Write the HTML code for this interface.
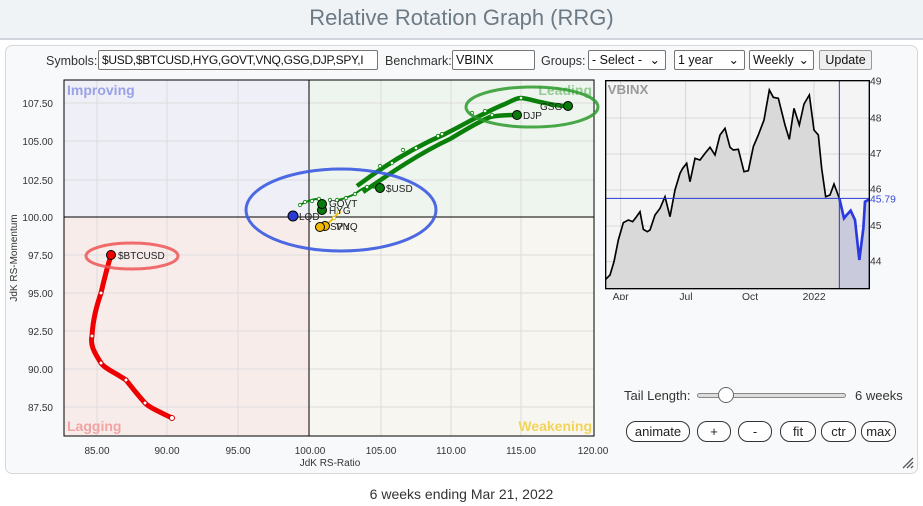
<!DOCTYPE html>
<html><head><meta charset="utf-8"><style>
*{box-sizing:border-box}
body{margin:0;width:923px;height:506px;background:#fff;font-family:"Liberation Sans",sans-serif;position:relative;overflow:hidden}
.hdr{position:absolute;left:0;top:0;width:923px;height:40px;background:#f0f3f5;border-bottom:2px solid #cfd5da;text-align:center;font-size:22px;color:#6c7a86;line-height:36px}
.panel{position:absolute;left:5px;top:45px;width:913px;height:429px;border:1px solid #d5d8db;border-radius:7px;background:#f8f9fa}
.ctl{position:absolute;font-size:12.5px;color:#333;top:52px;height:20px;line-height:18px}
.inp{position:absolute;top:50px;height:20px;border:1px solid #767676;background:#fff;font-size:12.5px;line-height:18px;padding-left:3px;color:#111;border-radius:2px;white-space:nowrap;overflow:hidden}
.btn{position:absolute;top:421px;height:21px;border:1px solid #333;border-radius:10px;background:#fff;font-size:13px;text-align:center;line-height:19px;color:#222}
.foot{position:absolute;top:486px;left:0;width:923px;text-align:center;font-size:14px;color:#333}
</style></head><body>
<div class="hdr">Relative Rotation Graph (RRG)</div>
<div class="panel"></div>
<div class="ctl" style="left:46px">Symbols:</div>
<div class="inp" style="left:98px;width:280px;font-size:12px;letter-spacing:-0.3px">$USD,$BTCUSD,HYG,GOVT,VNQ,GSG,DJP,SPY,I</div>
<div class="ctl" style="left:385px">Benchmark:</div>
<div class="inp" style="left:452px;width:83px">VBINX</div>
<div class="ctl" style="left:541px">Groups:</div>
<div class="inp" style="left:588px;width:78px">- Select -<span style="position:absolute;right:5px">&#8964;</span></div>
<div class="inp" style="left:674px;width:71px">1 year<span style="position:absolute;right:5px">&#8964;</span></div>
<div class="inp" style="left:749px;width:65px">Weekly<span style="position:absolute;right:4px">&#8964;</span></div>
<div class="inp" style="left:819px;width:53px;background:#efefef;border-color:#999;text-align:center;padding:0">Update</div>

<svg style="position:absolute;left:0;top:0" width="923" height="506" font-family="Liberation Sans, sans-serif">
<rect x="64" y="80" width="245" height="137" fill="#eeeff7"/>
<rect x="309" y="80" width="285" height="137" fill="#eef4ee"/>
<rect x="64" y="217" width="245" height="219" fill="#f8eceb"/>
<rect x="309" y="217" width="285" height="219" fill="#f8f6f0"/>
<g stroke="#dcdcdc" stroke-width="1">
<line x1="97" y1="80" x2="97" y2="436"/><line x1="167" y1="80" x2="167" y2="436"/><line x1="238" y1="80" x2="238" y2="436"/><line x1="381" y1="80" x2="381" y2="436"/><line x1="451" y1="80" x2="451" y2="436"/><line x1="521" y1="80" x2="521" y2="436"/>
<line x1="64" y1="103" x2="594" y2="103"/><line x1="64" y1="141" x2="594" y2="141"/><line x1="64" y1="180" x2="594" y2="180"/><line x1="64" y1="255" x2="594" y2="255"/><line x1="64" y1="293" x2="594" y2="293"/><line x1="64" y1="331" x2="594" y2="331"/><line x1="64" y1="369" x2="594" y2="369"/><line x1="64" y1="407" x2="594" y2="407"/>
</g>
<line x1="309" y1="80" x2="309" y2="436" stroke="#000"/><line x1="64" y1="217" x2="594" y2="217" stroke="#000"/>
<rect x="64" y="80" width="530" height="356" fill="none" stroke="#000"/>
<g font-size="14" font-weight="bold">
<text x="67" y="95" fill="#9aa2e6">Improving</text>
<text x="592" y="95" fill="#94cc94" text-anchor="end">Leading</text>
<text x="67" y="431" fill="#f0a4a4">Lagging</text>
<text x="592" y="431" fill="#f2d45a" text-anchor="end">Weakening</text>
</g>
<g font-size="10" fill="#333" text-anchor="end">
<text x="53" y="107">107.50</text><text x="53" y="145">105.00</text><text x="53" y="184">102.50</text><text x="53" y="221">100.00</text><text x="53" y="259">97.50</text><text x="53" y="297">95.00</text><text x="53" y="335">92.50</text><text x="53" y="373">90.00</text><text x="53" y="411">87.50</text>
</g>
<g font-size="10" fill="#333" text-anchor="middle">
<text x="97" y="454">85.00</text><text x="167" y="454">90.00</text><text x="238" y="454">95.00</text><text x="310" y="454">100.00</text><text x="381" y="454">105.00</text><text x="451" y="454">110.00</text><text x="521" y="454">115.00</text><text x="593" y="454">120.00</text>
<text x="330" y="466">JdK RS-Ratio</text>
</g>
<text transform="translate(17,258) rotate(-90)" font-size="10" fill="#333" text-anchor="middle">JdK RS-Momentum</text>
<path d="M172,418 C160,412 150,408 145,403 C136,393 130,385 126,380 C114,372 104,368 101,363 C94,352 90,345 92,336 C93,318 97,305 101,293 C104,280 108,265 111,255" fill="none" stroke="#e00" stroke-width="5" stroke-linecap="round"/>
<g fill="#fff" stroke="#c00" stroke-width="1"><circle cx="172" cy="418" r="2.5"/><circle cx="145" cy="403" r="2"/><circle cx="126" cy="380" r="2"/><circle cx="101" cy="363" r="2"/><circle cx="92" cy="336" r="2"/><circle cx="101" cy="293" r="2"/></g>
<ellipse cx="132" cy="256" rx="46" ry="13" fill="none" stroke="#e55" stroke-width="3" opacity="0.85"/>
<circle cx="111" cy="255" r="4.5" fill="#e00" stroke="#000"/>
<text x="118" y="259" font-size="10" fill="#222">$BTCUSD</text>
<path d="M357,186 C385,165 415,147 445,134 C465,124 485,112 505,104 C512,101 516,98 521,98 C530,99 535,101 540,102 C550,104 558,106 567,106" fill="none" stroke="#0a800a" stroke-width="4.5"/>
<path d="M363,192 C392,172 420,153 450,139 C465,130 478,122 490,117 C500,115 510,115 517,115" fill="none" stroke="#0a800a" stroke-width="4.5"/>
<g fill="#fff" stroke="#080" stroke-width=".8"><circle cx="380" cy="166" r="1.7"/><circle cx="392" cy="163" r="1.7"/><circle cx="403" cy="150" r="1.7"/><circle cx="416" cy="148" r="1.7"/><circle cx="438" cy="136" r="1.7"/><circle cx="442" cy="134" r="1.7"/><circle cx="472" cy="113" r="1.7"/><circle cx="485" cy="111" r="1.7"/><circle cx="492" cy="115" r="1.7"/><circle cx="521" cy="98" r="1.7"/></g>
<ellipse cx="532" cy="107" rx="66" ry="20" fill="none" stroke="#2a9a2a" stroke-width="3" opacity="0.85"/>
<circle cx="568" cy="106" r="4.5" fill="#0a7a0a" stroke="#000"/>
<circle cx="517" cy="115" r="4.5" fill="#0a7a0a" stroke="#000"/>
<text x="540" y="110" font-size="10" fill="#222">GSG</text>
<text x="523" y="119" font-size="10" fill="#222">DJP</text>
<path d="M337,200 C345,199 350,196 355,194 C360,190 364,187 368,187 L380,188" fill="none" stroke="#0a800a" stroke-width="2"/>
<path d="M300,205 C305,202 310,200 316,199 C320,199 322,202 322,203" fill="none" stroke="#0a800a" stroke-width="2"/>
<path d="M339,212 C334,218 330,222 325,226" fill="none" stroke="#f0c000" stroke-width="2"/>
<g fill="#fff" stroke="#080" stroke-width=".8"><circle cx="337" cy="200" r="1.7"/><circle cx="346" cy="198" r="1.7"/><circle cx="355" cy="194" r="1.7"/><circle cx="367" cy="187" r="1.7"/><circle cx="300" cy="205" r="1.7"/><circle cx="305" cy="202" r="1.7"/><circle cx="312" cy="201" r="1.7"/><circle cx="319" cy="199" r="1.7"/><circle cx="330" cy="200" r="1.7"/></g>
<g fill="#fff" stroke="#e0b000" stroke-width=".8"><circle cx="339" cy="212" r="1.7"/><circle cx="334" cy="218" r="1.7"/></g>
<ellipse cx="341" cy="210" rx="95" ry="41" fill="none" stroke="#3a5ae0" stroke-width="3" opacity="0.9"/>
<circle cx="380" cy="188" r="4.5" fill="#0a7a0a" stroke="#000"/>
<circle cx="322" cy="210" r="4.5" fill="#0a7a0a" stroke="#000"/>
<circle cx="322" cy="204" r="4.5" fill="#0a7a0a" stroke="#000"/>
<circle cx="293" cy="216" r="5" fill="#2a3ad0" stroke="#000"/>
<circle cx="325" cy="226" r="4.5" fill="#f0b800" stroke="#000"/>
<circle cx="320" cy="227" r="4.5" fill="#f0b800" stroke="#000"/>
<g font-size="10" fill="#222"><text x="386" y="192">$USD</text><text x="329" y="207">GOVT</text><text x="329" y="214">HYG</text><text x="299" y="220">LQD</text><text x="330" y="230">SPY</text><text x="336" y="230">VNQ</text></g>
</svg>

<svg style="position:absolute;left:460px;top:40px" width="463" height="260" viewBox="0 0 1389 780" font-family="Liberation Sans, sans-serif">
<rect x="437" y="122" width="791" height="624" fill="#f4f4f4"/>
<g stroke="#d2d2d2" stroke-width="2.5"><line x1="482" y1="122" x2="482" y2="746"/><line x1="677" y1="122" x2="677" y2="746"/><line x1="870" y1="122" x2="870" y2="746"/><line x1="1062" y1="122" x2="1062" y2="746"/>
<line x1="437" y1="234" x2="1228" y2="234"/><line x1="437" y1="342" x2="1228" y2="342"/><line x1="437" y1="450" x2="1228" y2="450"/><line x1="437" y1="558" x2="1228" y2="558"/><line x1="437" y1="665" x2="1228" y2="665"/></g>
<path d="M437,718 L450,705 462,665 475,600 490,548 505,540 518,545 528,532 540,515 550,568 562,575 570,570 585,525 600,505 615,470 630,530 645,450 660,400 668,385 680,370 690,425 705,355 720,360 735,340 750,322 765,345 780,285 795,265 810,322 820,330 835,328 852,395 865,392 880,320 895,285 912,240 928,150 940,172 955,175 975,255 988,298 1002,205 1018,255 1032,192 1048,165 1062,270 1075,285 1085,385 1097,470 1110,465 1122,432 1138,475 L1138,746 L437,746Z" fill="#d9d9d9"/>
<path d="M1138,475 L1152,535 1160,525 1172,512 1185,540 1198,660 1210,565 1215,485 1228,478 L1228,746 L1138,746Z" fill="#c9cbdc"/>
<path d="M437,718 L450,705 462,665 475,600 490,548 505,540 518,545 528,532 540,515 550,568 562,575 570,570 585,525 600,505 615,470 630,530 645,450 660,400 668,385 680,370 690,425 705,355 720,360 735,340 750,322 765,345 780,285 795,265 810,322 820,330 835,328 852,395 865,392 880,320 895,285 912,240 928,150 940,172 955,175 975,255 988,298 1002,205 1018,255 1032,192 1048,165 1062,270 1075,285 1085,385 1097,470 1110,465 1122,432 1138,475" fill="none" stroke="#000" stroke-width="5"/>
<path d="M1138,475 L1152,535 1160,525 1172,512 1185,540 1198,660 1210,565 1215,485 1228,478" fill="none" stroke="#2a3ae0" stroke-width="8"/>
<line x1="437" y1="475" x2="1228" y2="475" stroke="#2a3ad0" stroke-width="3"/>
<line x1="1138" y1="122" x2="1138" y2="746" stroke="#2a3ad0" stroke-width="3"/>
<line x1="1228" y1="122" x2="1228" y2="746" stroke="#2a3ad0" stroke-width="3"/>
<rect x="437" y="122" width="791" height="624" fill="none" stroke="#000" stroke-width="4"/>
<text x="443" y="162" font-size="40" font-weight="bold" fill="#999">VBINX</text>
<g font-size="31" fill="#333"><text x="1230" y="134">49</text><text x="1230" y="244">48</text><text x="1230" y="351">47</text><text x="1230" y="458">46</text><text x="1230" y="567">45</text><text x="1230" y="674">44</text>
<text x="1230" y="488" fill="#3a4ad0">45.79</text>
<text x="458" y="780">Apr</text><text x="658" y="780">Jul</text><text x="846" y="780">Oct</text><text x="1028" y="780">2022</text></g>
</svg>

<div style="position:absolute;left:624px;top:388px;font-size:13px;color:#333">Tail Length:</div>
<div style="position:absolute;left:697px;top:393px;width:149px;height:5px;border:1px solid #888;border-radius:3px;background:#ddd"></div>
<div style="position:absolute;left:718px;top:387px;width:16px;height:16px;border:1px solid #666;border-radius:50%;background:#fff"></div>
<div style="position:absolute;left:855px;top:388px;font-size:13px;color:#333">6 weeks</div>
<div class="btn" style="left:626px;width:64px">animate</div>
<div class="btn" style="left:697px;width:34px">+</div>
<div class="btn" style="left:738px;width:34px">-</div>
<div class="btn" style="left:780px;width:36px">fit</div>
<div class="btn" style="left:821px;width:35px">ctr</div>
<div class="btn" style="left:861px;width:35px">max</div>
<svg style="position:absolute;left:900px;top:455px" width="14" height="14"><path d="M3,13 L13,3 M7,13 L13,7 M11,13 L13,11" stroke="#555" stroke-width="1.3"/></svg>
<div class="foot">6 weeks ending Mar 21, 2022</div>
</body></html>
